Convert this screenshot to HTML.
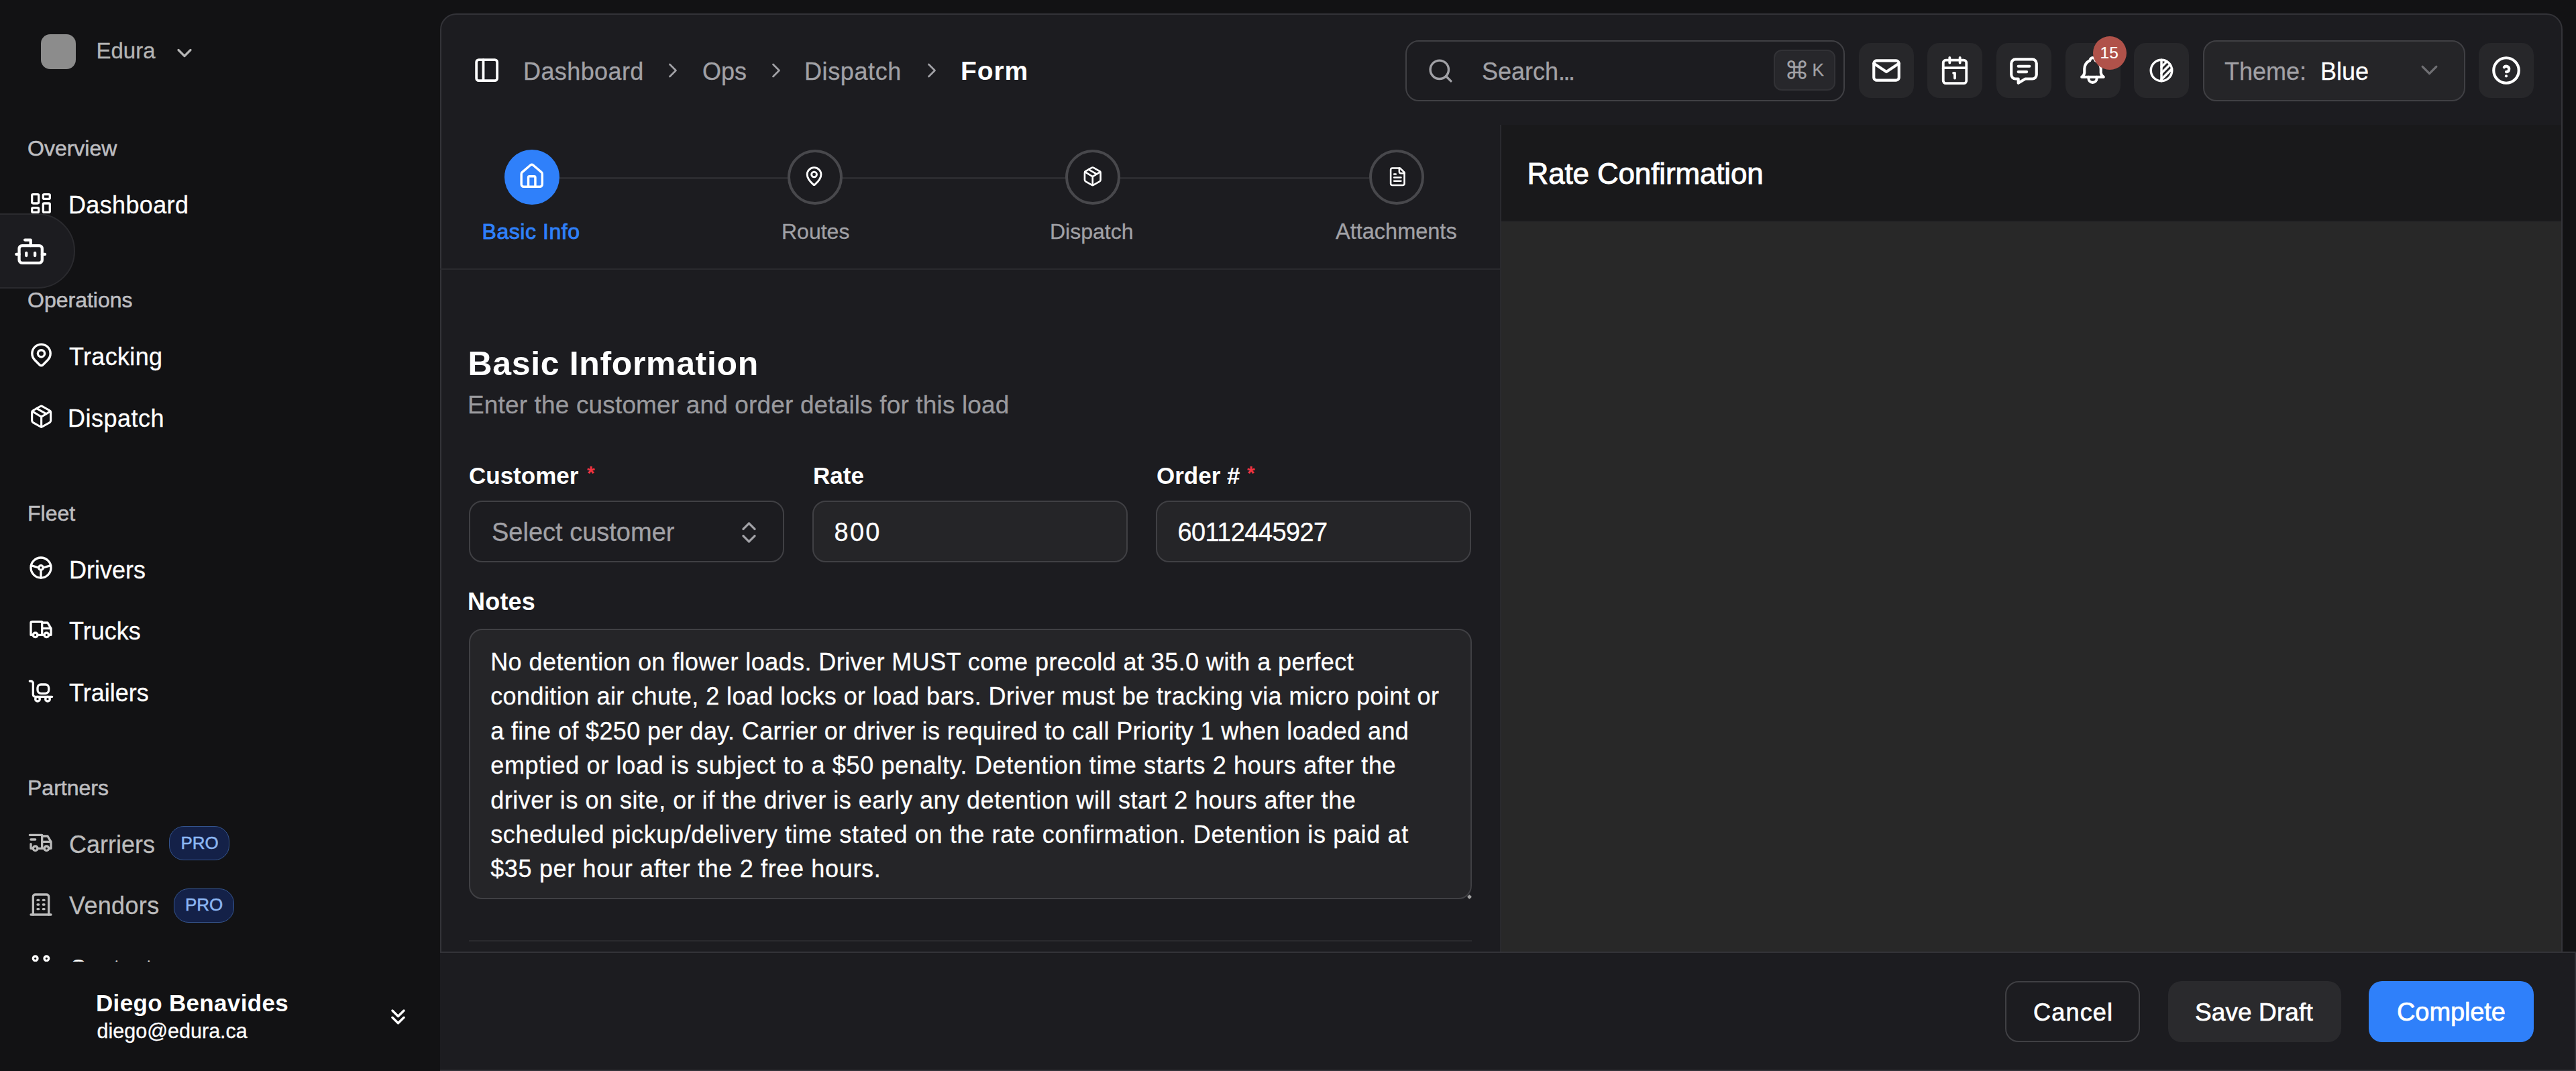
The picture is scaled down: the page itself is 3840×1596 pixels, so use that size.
<!DOCTYPE html>
<html><head><meta charset="utf-8"><style>
html,body{margin:0;padding:0;overflow:hidden;background:#121214;font-family:"Liberation Sans", sans-serif;}
#root{position:relative;width:3840px;height:1596px;overflow:hidden;}
@media (max-width:2400px){#root{zoom:0.5;}}
.t{position:absolute;line-height:1;white-space:pre;}
.b{position:absolute;}
.i{position:absolute;overflow:visible;}
</style></head><body><div id="root">
<div class="b" style="left:61px;top:51px;width:52px;height:52px;background:#8c8c8c;border-radius:14px;"></div>
<div class="t" style="left:143.5px;top:58.6px;font-size:33px;color:#b4b4b4;font-weight:400;-webkit-text-stroke:0.3px #b4b4b4;">Edura</div>
<svg class="i" style="left:257.0px;top:61.0px;width:36px;height:36px;" viewBox="0 0 24 24" fill="none" stroke="#b4b4b4" stroke-width="2.2" stroke-linecap="round" stroke-linejoin="round"><path d="m6 9 6 6 6-6"/></svg>
<div class="t" style="left:41.0px;top:205.0px;font-size:32px;color:#bdbdc0;font-weight:400;-webkit-text-stroke:0.55px #bdbdc0;">Overview</div>
<svg class="i" style="left:41.0px;top:283.0px;width:40px;height:40px;" viewBox="0 0 24 24" fill="none" stroke="#fff" stroke-width="2" stroke-linecap="round" stroke-linejoin="round"><path d="M5 4h4a1 1 0 0 1 1 1v6a1 1 0 0 1 -1 1h-4a1 1 0 0 1 -1 -1v-6a1 1 0 0 1 1 -1"/><path d="M5 16h4a1 1 0 0 1 1 1v2a1 1 0 0 1 -1 1h-4a1 1 0 0 1 -1 -1v-2a1 1 0 0 1 1 -1"/><path d="M15 12h4a1 1 0 0 1 1 1v6a1 1 0 0 1 -1 1h-4a1 1 0 0 1 -1 -1v-6a1 1 0 0 1 1 -1"/><path d="M15 4h4a1 1 0 0 1 1 1v2a1 1 0 0 1 -1 1h-4a1 1 0 0 1 -1 -1v-2a1 1 0 0 1 1 -1"/></svg>
<div class="t" style="left:102.0px;top:287.5px;font-size:36px;color:#fff;font-weight:400;letter-spacing:0.35px;-webkit-text-stroke:0.3px #fff;">Dashboard</div>
<div class="t" style="left:41.0px;top:431.4px;font-size:32px;color:#bdbdc0;font-weight:400;-webkit-text-stroke:0.55px #bdbdc0;">Operations</div>
<svg class="i" style="left:41.0px;top:507.8px;width:41px;height:41px;" viewBox="0 0 24 24" fill="none" stroke="#fff" stroke-width="2" stroke-linecap="round" stroke-linejoin="round"><path d="M9 11a3 3 0 1 0 6 0a3 3 0 0 0 -6 0"/><path d="M17.657 16.657l-4.243 4.243a2 2 0 0 1 -2.827 0l-4.244 -4.243a8 8 0 1 1 11.314 0z"/></svg>
<div class="t" style="left:103.0px;top:514.3px;font-size:36px;color:#fff;font-weight:400;letter-spacing:0.33px;-webkit-text-stroke:0.3px #fff;">Tracking</div>
<svg class="i" style="left:43.0px;top:602.1px;width:37.3px;height:37.3px;" viewBox="0 0 24 24" fill="none" stroke="#fff" stroke-width="2" stroke-linecap="round" stroke-linejoin="round"><path d="M11 21.73a2 2 0 0 0 2 0l7-4A2 2 0 0 0 21 16V8a2 2 0 0 0-1-1.730l-7-4a2 2 0 0 0-2 0l-7 4A2 2 0 0 0 3 8v8a2 2 0 0 0 1 1.73z"/><path d="M12 22V12"/><path d="m3.3 7 7.703 4.734a2 2 0 0 0 1.994 0L20.7 7"/><path d="m7.5 4.27 9 5.15"/></svg>
<div class="t" style="left:101.0px;top:605.5px;font-size:36px;color:#fff;font-weight:400;letter-spacing:0.5px;-webkit-text-stroke:0.3px #fff;">Dispatch</div>
<div class="t" style="left:41.0px;top:749.3px;font-size:32px;color:#bdbdc0;font-weight:400;-webkit-text-stroke:0.55px #bdbdc0;">Fleet</div>
<svg class="i" style="left:41.0px;top:826.0px;width:40px;height:40px;" viewBox="0 0 24 24" fill="none" stroke="#fff" stroke-width="2" stroke-linecap="round" stroke-linejoin="round"><circle cx="12" cy="12" r="9"/><circle cx="12" cy="12" r="2"/><path d="M12 14v7"/><path d="M10 12l-6.75-2"/><path d="M14 12l6.75-2"/></svg>
<div class="t" style="left:103.0px;top:831.5px;font-size:36px;color:#fff;font-weight:400;-webkit-text-stroke:0.3px #fff;">Drivers</div>
<svg class="i" style="left:41.0px;top:918.1px;width:40px;height:40px;" viewBox="0 0 24 24" fill="none" stroke="#fff" stroke-width="2" stroke-linecap="round" stroke-linejoin="round"><circle cx="7" cy="17" r="2"/><circle cx="17" cy="17" r="2"/><path d="M5 17h-2v-11a1 1 0 0 1 1 -1h9v12m-4 0h6m4 0h2v-6h-8m0 -5h5l3 5"/></svg>
<div class="t" style="left:103.0px;top:922.8px;font-size:36px;color:#fff;font-weight:400;-webkit-text-stroke:0.3px #fff;">Trucks</div>
<svg class="i" style="left:41.0px;top:1009.8px;width:40px;height:40px;" viewBox="0 0 24 24" fill="none" stroke="#fff" stroke-width="2" stroke-linecap="round" stroke-linejoin="round"><path d="M2 3h1a2 2 0 0 1 2 2v10a2 2 0 0 0 2 2h15"/><path d="M9 9a3 3 0 0 1 3 -3h4a3 3 0 0 1 3 3v2a3 3 0 0 1 -3 3h-4a3 3 0 0 1 -3 -3z"/><circle cx="9" cy="19" r="2"/><circle cx="18" cy="19" r="2"/></svg>
<div class="t" style="left:103.0px;top:1015.3px;font-size:36px;color:#fff;font-weight:400;-webkit-text-stroke:0.3px #fff;">Trailers</div>
<div class="t" style="left:41.0px;top:1158.2px;font-size:32px;color:#bdbdc0;font-weight:400;-webkit-text-stroke:0.55px #bdbdc0;">Partners</div>
<svg class="i" style="left:41.0px;top:1236.4px;width:40px;height:40px;" viewBox="0 0 24 24" fill="none" stroke="#bcbcbc" stroke-width="2" stroke-linecap="round" stroke-linejoin="round"><circle cx="7" cy="17" r="2"/><circle cx="17" cy="17" r="2"/><path d="M5 17h-2v-4m-1 -8h11v12m-4 0h6m4 0h2v-6h-8m0 -5h5l3 5"/><path d="M3 9l4 0"/></svg>
<div class="t" style="left:103.0px;top:1240.9px;font-size:36px;color:#bcbcbc;font-weight:400;-webkit-text-stroke:0.3px #bcbcbc;">Carriers</div>
<svg class="i" style="left:41.0px;top:1327.8px;width:40px;height:40px;" viewBox="0 0 24 24" fill="none" stroke="#bcbcbc" stroke-width="2" stroke-linecap="round" stroke-linejoin="round"><path d="M3 21l18 0"/><path d="M9 8l1 0"/><path d="M9 12l1 0"/><path d="M9 16l1 0"/><path d="M14 8l1 0"/><path d="M14 12l1 0"/><path d="M14 16l1 0"/><path d="M5 21v-16a2 2 0 0 1 2 -2h10a2 2 0 0 1 2 2v16"/></svg>
<div class="t" style="left:103.0px;top:1332.1px;font-size:36px;color:#bcbcbc;font-weight:400;letter-spacing:0.35px;-webkit-text-stroke:0.3px #bcbcbc;">Vendors</div>
<div class="b" style="left:252px;top:1231.4px;width:90px;height:51px;background:#142148;border-radius:22px;border:1.5px solid #35558f;box-sizing:border-box;"></div>
<div class="t" style="left:269.5px;top:1242.8px;font-size:26px;color:#8cb6f2;font-weight:400;-webkit-text-stroke:0.5px #8cb6f2;">PRO</div>
<div class="b" style="left:258.5px;top:1323.7px;width:90px;height:51px;background:#142148;border-radius:22px;border:1.5px solid #35558f;box-sizing:border-box;"></div>
<div class="t" style="left:276.0px;top:1335.1px;font-size:26px;color:#8cb6f2;font-weight:400;-webkit-text-stroke:0.5px #8cb6f2;">PRO</div>
<div class="b" style="left:0;top:1380px;width:650px;height:53px;overflow:hidden">
<svg class="i" style="left:41.3px;top:39.7px;width:40px;height:40px;" viewBox="0 0 24 24" fill="none" stroke="#fff" stroke-width="2" stroke-linecap="round" stroke-linejoin="round"><circle cx="7" cy="5" r="2"/><circle cx="17" cy="5" r="2"/><path d="M5 22v-5l-1 -1v-4a1 1 0 0 1 1 -1h4a1 1 0 0 1 1 1v4l-1 1v5"/><path d="M15 22v-4h-2l2 -6a1 1 0 0 1 1 -1h2a1 1 0 0 1 1 1l2 6h-2v4"/></svg>
<div class="t" style="left:103px;top:45.5px;font-size:36px;color:#fff">Contacts</div>
</div>
<div class="b" style="left:-60px;top:318px;width:172px;height:112px;background:#1c1c20;border-radius:56px;border:2px solid #2a2a2e;box-sizing:border-box;"></div>
<svg class="i" style="left:20.3px;top:348.6px;width:51.4px;height:51.4px;" viewBox="0 0 24 24" fill="none" stroke="#fff" stroke-width="2" stroke-linecap="round" stroke-linejoin="round"><path d="M12 8V4H8"/><rect width="16" height="12" x="4" y="8" rx="2"/><path d="M2 14h2"/><path d="M20 14h2"/><path d="M15 13v2"/><path d="M9 13v2"/></svg>
<div class="t" style="left:143.0px;top:1477.1px;font-size:35px;color:#fff;font-weight:700;letter-spacing:0.33px;">Diego Benavides</div>
<div class="t" style="left:144.5px;top:1521.2px;font-size:30.5px;color:#fff;font-weight:400;-webkit-text-stroke:0.3px #fff;">diego@edura.ca</div>
<svg class="i" style="left:573.4px;top:1494.2px;width:41px;height:41px;" viewBox="0 0 24 24" fill="none" stroke="#fff" stroke-width="2" stroke-linecap="round" stroke-linejoin="round"><path d="M7 7l5 5l5 -5"/><path d="M7 13l5 5l5 -5"/></svg>
<div class="b" style="left:656px;top:20px;width:3164px;height:1600px;background:#1c1c20;border-radius:24px;border:2px solid #333338;box-sizing:border-box;"></div>
<svg class="i" style="left:704.8px;top:83.7px;width:41.3px;height:41.3px;" viewBox="0 0 24 24" fill="none" stroke="#fff" stroke-width="2.2" stroke-linecap="round" stroke-linejoin="round"><rect width="18" height="18" x="3" y="3" rx="2"/><path d="M9 3v18"/></svg>
<div class="t" style="left:780.0px;top:88.8px;font-size:36px;color:#a1a1a6;font-weight:400;letter-spacing:0.4px;-webkit-text-stroke:0.3px #a1a1a6;">Dashboard</div>
<svg class="i" style="left:985.0px;top:86.5px;width:36px;height:36px;" viewBox="0 0 24 24" fill="none" stroke="#a1a1a6" stroke-width="1.8" stroke-linecap="round" stroke-linejoin="round"><path d="m9 18 6-6-6-6"/></svg>
<div class="t" style="left:1047.0px;top:88.8px;font-size:36px;color:#a1a1a6;font-weight:400;-webkit-text-stroke:0.3px #a1a1a6;">Ops</div>
<svg class="i" style="left:1139.0px;top:86.5px;width:36px;height:36px;" viewBox="0 0 24 24" fill="none" stroke="#a1a1a6" stroke-width="1.8" stroke-linecap="round" stroke-linejoin="round"><path d="m9 18 6-6-6-6"/></svg>
<div class="t" style="left:1199.0px;top:88.8px;font-size:36px;color:#a1a1a6;font-weight:400;letter-spacing:0.6px;-webkit-text-stroke:0.3px #a1a1a6;">Dispatch</div>
<svg class="i" style="left:1371.0px;top:86.5px;width:36px;height:36px;" viewBox="0 0 24 24" fill="none" stroke="#a1a1a6" stroke-width="1.8" stroke-linecap="round" stroke-linejoin="round"><path d="m9 18 6-6-6-6"/></svg>
<div class="t" style="left:1432.0px;top:86.3px;font-size:39px;color:#fff;font-weight:700;letter-spacing:0.9px;">Form</div>
<div class="b" style="left:2095px;top:60px;width:655px;height:91px;background:transparent;border-radius:20px;border:2px solid #404044;box-sizing:border-box;"></div>
<svg class="i" style="left:2127.2px;top:84.6px;width:41px;height:41px;" viewBox="0 0 24 24" fill="none" stroke="#a1a1a6" stroke-width="2" stroke-linecap="round" stroke-linejoin="round"><circle cx="11" cy="11" r="8"/><path d="m21 21-4.3-4.3"/></svg>
<div class="t" style="left:2209.0px;top:89.0px;font-size:36px;color:#a1a1a6;font-weight:400;-webkit-text-stroke:0.3px #a1a1a6;">Search<span style="letter-spacing:-2.5px">...</span></div>
<div class="b" style="left:2644px;top:74px;width:92px;height:61px;background:#27272b;border-radius:12px;border:2px solid #323236;box-sizing:border-box;"></div>
<div class="t" style="left:2660.0px;top:86.7px;font-size:37px;color:#a1a1a6;font-weight:400;">⌘</div>
<div class="t" style="left:2701.5px;top:91.0px;font-size:26px;color:#a1a1a6;font-weight:400;-webkit-text-stroke:0.3px #a1a1a6;">K</div>
<div class="b" style="left:2771px;top:63.5px;width:82px;height:82px;background:#27272a;border-radius:18px;"></div>
<svg class="i" style="left:2787.0px;top:79.5px;width:50px;height:50px;" viewBox="0 0 24 24" fill="none" stroke="#fff" stroke-width="2" stroke-linecap="round" stroke-linejoin="round"><rect x="3" y="5" width="18" height="14" rx="2"/><path d="M3 7l9 6l9 -6"/></svg>
<div class="b" style="left:2873px;top:63.5px;width:82px;height:82px;background:#27272a;border-radius:18px;"></div>
<svg class="i" style="left:2891.0px;top:81.5px;width:46px;height:46px;" viewBox="0 0 24 24" fill="none" stroke="#fff" stroke-width="2" stroke-linecap="round" stroke-linejoin="round"><path d="M11 14h1v4"/><path d="M16 2v4"/><path d="M3 10h18"/><path d="M8 2v4"/><rect x="3" y="4" width="18" height="18" rx="2"/></svg>
<div class="b" style="left:2976px;top:63.5px;width:82px;height:82px;background:#27272a;border-radius:18px;"></div>
<svg class="i" style="left:2992.0px;top:79.5px;width:50px;height:50px;" viewBox="0 0 24 24" fill="none" stroke="#fff" stroke-width="2" stroke-linecap="round" stroke-linejoin="round"><path d="M8 9h8"/><path d="M8 13h6"/><path d="M18 4a3 3 0 0 1 3 3v8a3 3 0 0 1 -3 3h-5l-5 3v-3h-2a3 3 0 0 1 -3 -3v-8a3 3 0 0 1 3 -3h12z"/></svg>
<div class="b" style="left:3078.5px;top:63.5px;width:82px;height:82px;background:#27272a;border-radius:18px;"></div>
<svg class="i" style="left:3095.0px;top:80.0px;width:49px;height:49px;" viewBox="0 0 24 24" fill="none" stroke="#fff" stroke-width="2" stroke-linecap="round" stroke-linejoin="round"><path d="M10 5a2 2 0 1 1 4 0a7 7 0 0 1 4 6v3a4 4 0 0 0 2 3h-16a4 4 0 0 0 2 -3v-3a7 7 0 0 1 4 -6"/><path d="M9 17v1a3 3 0 0 0 6 0v-1"/></svg>
<div class="b" style="left:3181px;top:63.5px;width:82px;height:82px;background:#27272a;border-radius:18px;"></div>
<svg class="i" style="left:3201.0px;top:83.5px;width:42px;height:42px;" viewBox="0 0 24 24" fill="none" stroke="#fff" stroke-width="2" stroke-linecap="round" stroke-linejoin="round"><circle cx="12" cy="12" r="9"/><path d="M12 3l0 18"/><path d="M12 9l4.65 -4.65"/><path d="M12 14.3l7.37 -7.37"/><path d="M12 19.6l8.85 -8.85"/></svg>
<div class="b" style="left:3120px;top:54px;width:50px;height:50px;background:#b0524a;border-radius:25px;"></div>
<div class="t" style="left:3130.5px;top:67.3px;font-size:24.5px;color:#fff;font-weight:400;-webkit-text-stroke:0.2px #fff;">15</div>
<div class="b" style="left:3283.5px;top:60px;width:391px;height:91px;background:#252528;border-radius:20px;border:2px solid #404044;box-sizing:border-box;"></div>
<div class="t" style="left:3316.0px;top:89.0px;font-size:36px;color:#a1a1a6;font-weight:400;-webkit-text-stroke:0.3px #a1a1a6;">Theme:</div>
<div class="t" style="left:3459.0px;top:89.0px;font-size:36px;color:#fff;font-weight:400;-webkit-text-stroke:0.3px #fff;">Blue</div>
<svg class="i" style="left:3600.5px;top:84.0px;width:41px;height:41px;" viewBox="0 0 24 24" fill="none" stroke="#6e6e72" stroke-width="2" stroke-linecap="round" stroke-linejoin="round"><path d="m6 9 6 6 6-6"/></svg>
<div class="b" style="left:3695px;top:63.5px;width:82px;height:82px;background:#27272a;border-radius:18px;"></div>
<svg class="i" style="left:3711.0px;top:79.5px;width:50px;height:50px;" viewBox="0 0 24 24" fill="none" stroke="#fff" stroke-width="2" stroke-linecap="round" stroke-linejoin="round"><circle cx="12" cy="12" r="9"/><path d="M12 16v.01"/><path d="M12 13a2 2 0 0 0 .914 -3.782a1.98 1.98 0 0 0 -2.414 .483"/></svg>
<div class="b" style="left:833px;top:264px;width:1208px;height:3px;background:#2c2c30;border-radius:0px;"></div>
<div class="b" style="left:751.7px;top:223px;width:82px;height:82px;background:#2f80fa;border-radius:41px;"></div>
<div class="b" style="left:1173.8px;top:223px;width:82px;height:82px;background:#1c1c20;border-radius:41px;border:4.5px solid #48484c;box-sizing:border-box;"></div>
<div class="b" style="left:1587.9px;top:223px;width:82px;height:82px;background:#1c1c20;border-radius:41px;border:4.5px solid #48484c;box-sizing:border-box;"></div>
<div class="b" style="left:2040.8000000000002px;top:223px;width:82px;height:82px;background:#1c1c20;border-radius:41px;border:4.5px solid #48484c;box-sizing:border-box;"></div>
<svg class="i" style="left:772.2px;top:242.4px;width:41.5px;height:41.5px;" viewBox="0 0 24 24" fill="none" stroke="#fff" stroke-width="2" stroke-linecap="round" stroke-linejoin="round"><path d="M15 21v-8a1 1 0 0 0-1-1h-4a1 1 0 0 0-1 1v8"/><path d="M3 10a2 2 0 0 1 .709-1.528l7-5.999a2 2 0 0 1 2.582 0l7 5.999A2 2 0 0 1 21 10v9a2 2 0 0 1-2 2H5a2 2 0 0 1-2-2z"/></svg>
<svg class="i" style="left:1198.4px;top:247.3px;width:31.2px;height:31.2px;" viewBox="0 0 24 24" fill="none" stroke="#fff" stroke-width="2.2" stroke-linecap="round" stroke-linejoin="round"><path d="M20 10c0 4.993-5.539 10.193-7.399 11.799a1 1 0 0 1-1.202 0C9.539 20.193 4 14.993 4 10a8 8 0 0 1 16 0"/><circle cx="12" cy="10" r="3"/></svg>
<svg class="i" style="left:1612.9px;top:247.2px;width:31.5px;height:31.5px;" viewBox="0 0 24 24" fill="none" stroke="#fff" stroke-width="2" stroke-linecap="round" stroke-linejoin="round"><path d="M11 21.73a2 2 0 0 0 2 0l7-4A2 2 0 0 0 21 16V8a2 2 0 0 0-1-1.730l-7-4a2 2 0 0 0-2 0l-7 4A2 2 0 0 0 3 8v8a2 2 0 0 0 1 1.73z"/><path d="M12 22V12"/><path d="m3.3 7 7.703 4.734a2 2 0 0 0 1.994 0L20.7 7"/><path d="m7.5 4.27 9 5.15"/></svg>
<svg class="i" style="left:2067.6px;top:247.6px;width:30.6px;height:30.6px;" viewBox="0 0 24 24" fill="none" stroke="#fff" stroke-width="2" stroke-linecap="round" stroke-linejoin="round"><path d="M15 2H6a2 2 0 0 0-2 2v16a2 2 0 0 0 2 2h12a2 2 0 0 0 2-2V7Z"/><path d="M14 2v4a2 2 0 0 0 2 2h4"/><path d="M10 9H8"/><path d="M16 13H8"/><path d="M16 17H8"/></svg>
<div class="t" style="left:718.5px;top:329.4px;font-size:32px;color:#2f80fa;font-weight:400;letter-spacing:0.55px;-webkit-text-stroke:0.9px #2f80fa;">Basic Info</div>
<div class="t" style="left:1165.0px;top:329.4px;font-size:32px;color:#a1a1a6;font-weight:400;-webkit-text-stroke:0.3px #a1a1a6;">Routes</div>
<div class="t" style="left:1565.0px;top:329.4px;font-size:32px;color:#a1a1a6;font-weight:400;-webkit-text-stroke:0.3px #a1a1a6;">Dispatch</div>
<div class="t" style="left:1991.0px;top:329.0px;font-size:32.5px;color:#a1a1a6;font-weight:400;-webkit-text-stroke:0.3px #a1a1a6;">Attachments</div>
<div class="b" style="left:656px;top:400px;width:1580px;height:2px;background:#2a2a2e;border-radius:0px;"></div>
<div class="b" style="left:2236px;top:186px;width:2px;height:1232px;background:#2a2a2e;border-radius:0px;"></div>
<div class="b" style="left:2238px;top:186px;width:1580px;height:144px;background:#19191b;border-radius:0px;"></div>
<div class="b" style="left:2238px;top:330px;width:1580px;height:1090px;background:#282828;border-radius:0px;"></div>
<div class="b" style="left:2238px;top:329px;width:1580px;height:2px;background:#242426;border-radius:0px;"></div>
<div class="t" style="left:2276.5px;top:237.4px;font-size:44px;color:#fff;font-weight:400;letter-spacing:-0.15px;-webkit-text-stroke:0.9px #fff;">Rate Confirmation</div>
<div class="t" style="left:697.5px;top:517.2px;font-size:50px;color:#fff;font-weight:700;letter-spacing:0.65px;">Basic Information</div>
<div class="t" style="left:697.0px;top:585.0px;font-size:37px;color:#9a9a9e;font-weight:400;letter-spacing:0.15px;-webkit-text-stroke:0.3px #9a9a9e;">Enter the customer and order details for this load</div>
<div class="t" style="left:699.0px;top:691.4px;font-size:35px;color:#fff;font-weight:700;">Customer</div>
<div class="t" style="left:875.0px;top:690.1px;font-size:30px;color:#ef3340;font-weight:700;">*</div>
<div class="t" style="left:1212.0px;top:691.4px;font-size:35px;color:#fff;font-weight:700;">Rate</div>
<div class="t" style="left:1724.0px;top:691.4px;font-size:35px;color:#fff;font-weight:700;">Order #</div>
<div class="t" style="left:1859.0px;top:690.1px;font-size:30px;color:#ef3340;font-weight:700;">*</div>
<div class="b" style="left:699px;top:746px;width:470px;height:91.5px;background:transparent;border-radius:20px;border:2px solid #404044;box-sizing:border-box;"></div>
<div class="t" style="left:733.0px;top:773.8px;font-size:38px;color:#a1a1a6;font-weight:400;-webkit-text-stroke:0.3px #a1a1a6;">Select customer</div>
<svg class="i" style="left:1095.7px;top:772.5px;width:41px;height:41px;" viewBox="0 0 24 24" fill="none" stroke="#a1a1a6" stroke-width="2" stroke-linecap="round" stroke-linejoin="round"><path d="m7 15 5 5 5-5"/><path d="m7 9 5-5 5 5"/></svg>
<div class="b" style="left:1210.8px;top:746px;width:470px;height:91.5px;background:#252528;border-radius:20px;border:2px solid #404044;box-sizing:border-box;"></div>
<div class="t" style="left:1243.5px;top:773.8px;font-size:38px;color:#fff;font-weight:400;letter-spacing:2.3px;-webkit-text-stroke:0.3px #fff;">800</div>
<div class="b" style="left:1723.4px;top:746px;width:470px;height:91.5px;background:#252528;border-radius:20px;border:2px solid #404044;box-sizing:border-box;"></div>
<div class="t" style="left:1755.5px;top:773.8px;font-size:38px;color:#fff;font-weight:400;letter-spacing:-0.6px;-webkit-text-stroke:0.3px #fff;">60112445927</div>
<div class="t" style="left:697.0px;top:879.2px;font-size:36px;color:#fff;font-weight:700;letter-spacing:0.2px;">Notes</div>
<div class="b" style="left:699px;top:937px;width:1495px;height:402.5px;background:#252528;border-radius:20px;border:2px solid #404044;box-sizing:border-box;"></div>
<div class="t" style="left:731.2px;top:968.7px;font-size:36px;color:#fff;font-weight:400;letter-spacing:0.428px;-webkit-text-stroke:0.3px #fff;">No detention on flower loads. Driver MUST come precold at 35.0 with a perfect</div>
<div class="t" style="left:731.2px;top:1020.2px;font-size:36px;color:#fff;font-weight:400;letter-spacing:0.417px;-webkit-text-stroke:0.3px #fff;">condition air chute, 2 load locks or load bars. Driver must be tracking via micro point or</div>
<div class="t" style="left:731.2px;top:1071.6px;font-size:36px;color:#fff;font-weight:400;letter-spacing:0.375px;-webkit-text-stroke:0.3px #fff;">a fine of $250 per day. Carrier or driver is required to call Priority 1 when loaded and</div>
<div class="t" style="left:731.2px;top:1123.1px;font-size:36px;color:#fff;font-weight:400;letter-spacing:0.667px;-webkit-text-stroke:0.3px #fff;">emptied or load is subject to a $50 penalty. Detention time starts 2 hours after the</div>
<div class="t" style="left:731.2px;top:1174.5px;font-size:36px;color:#fff;font-weight:400;letter-spacing:0.523px;-webkit-text-stroke:0.3px #fff;">driver is on site, or if the driver is early any detention will start 2 hours after the</div>
<div class="t" style="left:731.2px;top:1226.0px;font-size:36px;color:#fff;font-weight:400;letter-spacing:0.642px;-webkit-text-stroke:0.3px #fff;">scheduled pickup/delivery time stated on the rate confirmation. Detention is paid at</div>
<div class="t" style="left:731.2px;top:1277.4px;font-size:36px;color:#fff;font-weight:400;letter-spacing:0.663px;-webkit-text-stroke:0.3px #fff;">$35 per hour after the 2 free hours.</div>
<div class="b" style="left:699px;top:1401px;width:1495px;height:2px;background:#2a2a2e;border-radius:0px;"></div>
<div class="b" style="left:2187.5px;top:1333.5px;width:5px;height:5px;background:#a0a0a0;border-radius:1px;transform:rotate(45deg);"></div>
<div class="b" style="left:656px;top:1418px;width:3184px;height:178px;background:#1c1c20;border-radius:0px;border-top:2px solid #333338;border-right:2px solid #333338;border-bottom:2px solid #333338;box-sizing:border-box;"></div>
<div class="b" style="left:2989px;top:1462px;width:201px;height:91px;background:transparent;border-radius:20px;border:2px solid #404044;box-sizing:border-box;"></div>
<div class="t" style="left:3031.0px;top:1491.1px;font-size:36px;color:#fff;font-weight:400;letter-spacing:1.2px;-webkit-text-stroke:0.7px #fff;">Cancel</div>
<div class="b" style="left:3232px;top:1462px;width:258px;height:91px;background:#2a2a2d;border-radius:20px;"></div>
<div class="t" style="left:3272.0px;top:1490.3px;font-size:37px;color:#fff;font-weight:400;letter-spacing:0.1px;-webkit-text-stroke:0.7px #fff;">Save Draft</div>
<div class="b" style="left:3530.7px;top:1462px;width:246px;height:91px;background:#2f80fa;border-radius:20px;"></div>
<div class="t" style="left:3573.0px;top:1489.4px;font-size:38px;color:#fff;font-weight:400;letter-spacing:-0.1px;-webkit-text-stroke:0.7px #fff;">Complete</div>
</div></body></html>
